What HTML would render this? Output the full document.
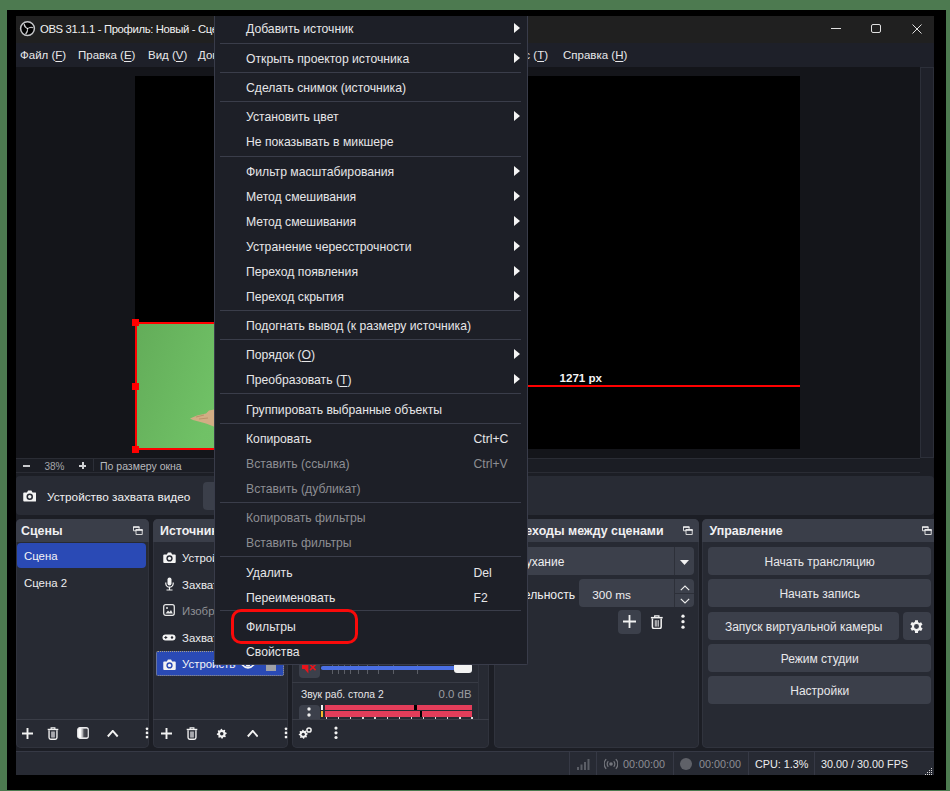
<!DOCTYPE html>
<html><head><meta charset="utf-8">
<style>
*{margin:0;padding:0;box-sizing:border-box}
html,body{width:950px;height:791px;overflow:hidden;background:#4d7a50;font-family:"Liberation Sans",sans-serif;color:#e6e6e8;font-size:12px}
.a{position:absolute}
svg{display:block}
#frame{left:7px;top:10px;width:939px;height:780px;background:#000}
#win{left:16px;top:16px;width:918px;height:759px;background:#1c1e25;overflow:hidden}
#title{left:0;top:0;width:918px;height:27px;background:#202020}
#menubar{left:0;top:27px;width:918px;height:24px;background:#1e2029}
.mb{top:0;height:24px;line-height:25px;font-size:11.5px;color:#e8e8ea;white-space:nowrap}
.u{text-decoration:underline;text-underline-offset:2px;text-decoration-thickness:1px}
#preview{left:0;top:51px;width:904px;height:391px;background:#14151a;overflow:hidden}
#canvas{left:119px;top:9px;width:665px;height:373px;background:#000}
#vscroll{left:904px;top:51px;width:14px;height:391px;background:#1f212a;border:1px solid #2c2f39}
#zoombar{left:0;top:442px;width:904px;height:15px;background:#1b1d24;border-top:1px solid #2a2c34;border-bottom:1px solid #2a2c34;font-size:10.5px;color:#a9abb0}
#toolbar{left:0;top:460px;width:918px;height:39px;background:#282b34;border-radius:4px}
.dock{top:503px;height:229px;background:#272a33;border-radius:5px;overflow:hidden;box-shadow:inset 0 0 0 1px #30333d}
.dtitle{left:0;top:0;right:0;height:23px;background:#3a3e49;font-weight:bold;font-size:12.4px;line-height:25px;padding-left:5px;white-space:nowrap;color:#f0f0f2}
.dfl{top:7px;width:10px;height:9px}
.dtb{left:0;right:0;top:200px;height:28px;border-top:1px solid #3a3d47}
#status{left:0;top:735px;width:918px;height:24px;background:#272a33;border-top:1px solid #363945;font-size:12px;color:#e6e6e8}
.btn{background:#3b3f4a;border-radius:4px;text-align:center;line-height:30px;height:28px;font-size:12px;color:#e8e8ea}
.li{height:25px;line-height:26px;font-size:11.4px;white-space:nowrap}
#menu{left:214px;top:16px;width:314px;height:649px;background:#1d1f27;border:1px solid #393c4a;border-top:0;border-radius:0 0 2px 2px}
.mi{left:31px;height:25px;line-height:26px;font-size:12.2px;color:#e6e6e8;white-space:nowrap}
.dis{color:#8d8e93}
.sep{left:5px;width:301px;height:1px;background:#3a3d4a}
.arr{left:299px;width:0;height:0;border-top:5.5px solid transparent;border-bottom:5.5px solid transparent;border-left:6.5px solid #f4f4f4}
.sc{left:258.5px;height:25px;line-height:26px;font-size:12.2px;color:#e6e6e8}
.sc.dis{color:#8d8e93}
#redbox{left:231px;top:608.5px;width:126.6px;height:35.7px;border:3.6px solid #fa0a0a;border-radius:10px}
</style></head><body>
<div id="frame" class="a"></div>
<div id="win" class="a">
  <div id="title" class="a">
    <svg class="a" style="left:3px;top:4px" width="17" height="17" viewBox="0 0 17 17">
      <circle cx="8.5" cy="8.6" r="6.9" fill="#000" stroke="#c4c5c8" stroke-width="1.5"/>
      <path d="M8.5 8.6Q5.4 8.3 4.5 4.4L5.6 3.7Q6.5 6.6 8.5 8.6z" fill="#d0d0d2"/>
      <path d="M8.5 8.6Q5.4 8.3 4.5 4.4L5.6 3.7Q6.5 6.6 8.5 8.6z" fill="#b8b9bc" transform="rotate(118 8.5 8.6)"/>
      <path d="M8.5 8.6Q5.4 8.3 4.5 4.4L5.6 3.7Q6.5 6.6 8.5 8.6z" fill="#c8c8ca" transform="rotate(236 8.5 8.6)"/>
      <circle cx="8.5" cy="8.6" r="0.9" fill="#f4f4f4"/>
    </svg>
    <div class="a" style="left:24px;top:1px;height:26px;line-height:25px;font-size:11.3px;letter-spacing:-0.35px;color:#f2f2f2;white-space:nowrap">OBS 31.1.1 - Профиль: Новый - Сцены: Без названия - Сцена</div>
    <div class="a" style="left:815px;top:12px;width:10px;height:1px;background:#e0e0e0"></div>
    <div class="a" style="left:855px;top:8px;width:10px;height:9px;border:1px solid #e0e0e0;border-radius:2px"></div>
    <svg class="a" style="left:896px;top:8px" width="10" height="10" viewBox="0 0 10 10"><path d="M0.5 0.5 L9.5 9.5 M9.5 0.5 L0.5 9.5" stroke="#e0e0e0" stroke-width="1"/></svg>
  </div>
  <div id="menubar" class="a">
    <div class="a mb" style="left:4px">Файл (<span class="u">F</span>)</div>
    <div class="a mb" style="left:62px">Правка (<span class="u">E</span>)</div>
    <div class="a mb" style="left:132px">Вид (<span class="u">V</span>)</div>
    <div class="a mb" style="left:182px">Док-панели (<span class="u">D</span>)</div>
    <div class="a mb" style="right:386px">Сервис (<span class="u">T</span>)</div>
    <div class="a mb" style="left:547px">Справка (<span class="u">H</span>)</div>
  </div>
  <div id="preview" class="a">
    <div id="canvas" class="a"></div>
    <div class="a" style="left:119px;top:256px;width:225px;height:126px;background:linear-gradient(110deg,#63ac59 0%,#70c166 40%,#78c96e 100%)"></div>
    <svg class="a" style="left:170px;top:338px" width="30" height="25" viewBox="170 338 30 25"><path d="M174 351.5L181 348.5L190 346.5L193 343.5L198 342.5L199 360L190 356.5L177 353z" fill="#d2ad84"/><path d="M180 350l8-2M183 352l9-1" stroke="#b58c63" stroke-width="0.8"/></svg>
    <div class="a" style="left:119px;top:255px;width:225px;height:2px;background:#f00"></div>
    <div class="a" style="left:119px;top:381px;width:225px;height:2px;background:#f00"></div>
    <div class="a" style="left:119px;top:255px;width:2px;height:128px;background:#f00"></div>
    <div class="a" style="left:115.8px;top:252px;width:7.3px;height:7.3px;background:#f00"></div>
    <div class="a" style="left:115.8px;top:315.5px;width:7.3px;height:7.3px;background:#f00"></div>
    <div class="a" style="left:115.8px;top:378.6px;width:7.3px;height:7.3px;background:#f00"></div>
    <div class="a" style="left:344px;top:318px;width:440px;height:2px;background:#f00"></div>
    <div class="a" style="left:543.5px;top:304px;font-weight:bold;font-size:11.6px;color:#f4f4f4;line-height:14px">1271 px</div>
  </div>
  <div id="vscroll" class="a"></div>
  <div id="zoombar" class="a">
    <div class="a" style="left:7px;top:6px;width:7px;height:1.6px;background:#c9cacd"></div>
    <div class="a" style="left:28.5px;top:1px;line-height:13px;font-size:10px;color:#a4a6ab">38%</div>
    <div class="a" style="left:63px;top:3px;width:7px;height:7px"><div class="a" style="left:0;top:3px;width:7px;height:1.6px;background:#d0d1d4"></div><div class="a" style="left:3px;top:0;width:1.6px;height:7px;background:#d0d1d4"></div></div>
    <div class="a" style="left:77px;top:0;width:1px;height:12px;background:#2c2f38"></div>
    <div class="a" style="left:84px;top:1px;line-height:13px;font-size:10.5px;color:#b8b9bd">По размеру окна</div>
  </div>
  <div id="toolbar" class="a">
    <svg class="a" style="left:6.5px;top:14.2px" width="13.5" height="11.5" viewBox="0 0 14 12"><path d="M1.2 2.6h2.9l1.2-2h3.4l1.2 2h2.9a1 1 0 0 1 1 1v7.4a1 1 0 0 1-1 1H1.2a1 1 0 0 1-1-1V3.6a1 1 0 0 1 1-1z" fill="#f4f4f4"/><circle cx="7" cy="7" r="3.4" fill="#282b34"/><circle cx="7" cy="7" r="1.8" fill="#f4f4f4"/></svg>
    <div class="a" style="left:31px;top:1.5px;height:39px;line-height:39px;font-size:11.8px;color:#f0f0f2;white-space:nowrap">Устройство захвата видео</div>
    <div class="a btn" style="left:187px;top:6px;width:120px"></div>
  </div>
  <!-- Scenes dock -->
  <div class="a dock" style="left:0;width:132.5px">
    <div class="a dtitle">Сцены</div>
    <svg class="a dfl" style="left:117px" width="11" height="10" viewBox="0 0 11 10"><path d="M0.5 1h6.2v4.3H0.5z" fill="none" stroke="#ececec" stroke-width="1"/><path d="M0 0.5h7.2v1.5H0z" fill="#f4f4f4"/><path d="M3.3 4.1h6.9v5.4H3.3z" fill="#3a3e49" stroke="#ececec" stroke-width="1"/><path d="M2.8 3.6h7.9v1.6H2.8z" fill="#f4f4f4"/></svg>
    <div class="a li" style="left:0.5px;top:24px;width:129px;background:#2a4ab5;border-radius:4px;padding-left:7.5px;color:#f4f4f6">Сцена</div>
    <div class="a li" style="left:0.5px;top:51px;width:129px;padding-left:7.5px;color:#eeeef0">Сцена 2</div>
    <div class="a dtb"></div>
  </div>
  <!-- Sources dock -->
  <div class="a dock" style="left:136.5px;width:135.5px">
    <div class="a dtitle" style="padding-left:7.5px">Источники</div>
    <svg class="a" style="left:10.5px;top:32.5px" width="13" height="11" viewBox="0 0 14 12"><path d="M1.2 2.6h2.9l1.2-2h3.4l1.2 2h2.9a1 1 0 0 1 1 1v7.4a1 1 0 0 1-1 1H1.2a1 1 0 0 1-1-1V3.6a1 1 0 0 1 1-1z" fill="#f4f4f4"/><circle cx="7" cy="7" r="3.4" fill="#272a33"/><circle cx="7" cy="7" r="1.8" fill="#f4f4f4"/></svg>
    <div class="a li" style="left:29.5px;top:26px;color:#eeeef0">Устройство захвата видео</div>
    <svg class="a" style="left:12px;top:58px" width="9" height="14" viewBox="0 0 9 14"><rect x="2.5" y="0.5" width="4" height="8" rx="2" fill="#f4f4f4"/><path d="M0.8 5.5v1a3.7 3.7 0 0 0 7.4 0v-1M4.5 10.5v2M1.5 13h6" stroke="#f4f4f4" stroke-width="1.2" fill="none"/></svg>
    <div class="a li" style="left:29.5px;top:52.5px;color:#eeeef0">Захват входного аудио</div>
    <svg class="a" style="left:10.5px;top:85px" width="12" height="12" viewBox="0 0 12 12"><rect x="0.7" y="0.7" width="10.6" height="10.6" rx="2" fill="none" stroke="#e6e6e6" stroke-width="1.3"/><path d="M2.5 9.5l2.5-3 1.5 1.5 1.5-2 1.8 3.5z" fill="#e6e6e6"/><circle cx="4" cy="4" r="1" fill="#e6e6e6"/></svg>
    <div class="a li" style="left:29.5px;top:79px;color:#8f9095">Изображение</div>
    <svg class="a" style="left:9.5px;top:114.5px" width="14" height="7" viewBox="0 0 14 7"><rect x="0.5" y="0.5" width="13" height="6" rx="3" fill="#f4f4f4"/><path d="M2.3 3.5h3M3.8 2v3" stroke="#272a33" stroke-width="1"/><circle cx="10" cy="3.5" r="1.2" fill="#272a33"/></svg>
    <div class="a li" style="left:29.5px;top:105.5px;color:#eeeef0">Захват игры</div>
    <div class="a" style="left:3.4px;top:132px;width:128.5px;height:25px;background:#2a4ab5;border:1px dotted #a89f85;border-radius:2px"></div>
    <svg class="a" style="left:10.5px;top:139.5px" width="13" height="11" viewBox="0 0 14 12"><path d="M1.2 2.6h2.9l1.2-2h3.4l1.2 2h2.9a1 1 0 0 1 1 1v7.4a1 1 0 0 1-1 1H1.2a1 1 0 0 1-1-1V3.6a1 1 0 0 1 1-1z" fill="#f4f4f4"/><circle cx="7" cy="7" r="3.4" fill="#2a4ab5"/><circle cx="7" cy="7" r="1.8" fill="#f4f4f4"/></svg>
    <div class="a li" style="left:29.5px;top:132px;width:54px;overflow:hidden;color:#f4f4f6">Устройство</div>
    <svg class="a" style="left:88px;top:139.5px" width="14" height="11" viewBox="0 0 14 11"><path d="M0.9 5.5Q7 -1.2 13.1 5.5Q7 12.2 0.9 5.5z" stroke="#f4f4f4" stroke-width="1.7" fill="none"/><circle cx="7" cy="5.5" r="2.3" fill="#f4f4f4"/></svg>
    <div class="a" style="left:113px;top:145px;width:10.5px;height:7px;background:#9fa0a6"></div>
    <div class="a dtb"></div>
  </div>
  <!-- Mixer dock -->
  <div class="a dock" style="left:276px;width:197px">
    <div class="a dtitle">Микшер аудио</div>
    <div class="a" style="left:0;top:23px;width:197px;height:177px;overflow:hidden"><div class="a" style="left:0;top:-23px;width:197px;height:200px">
    <div class="a" style="left:186px;top:23px;width:11px;height:177px;border-left:1px solid #31343e"></div>
    <div class="a" style="left:6.5px;top:136px;width:21.5px;height:22.5px;background:#3c404b;border-radius:4px"></div>
    <svg class="a" style="left:9px;top:138px" width="16" height="18" viewBox="0 0 16 18"><path d="M1 6h2.5L7.4 2v14.5L3.5 12H1z" fill="#e8141b"/><path d="M9 7.5l5.6 5.6M14.6 7.5l-5.6 5.6" stroke="#e8141b" stroke-width="1.7"/></svg>
    <div class="a" style="left:40.3px;top:146.4px;width:1px;height:8.4px;background:#5b5e67"></div><div class="a" style="left:45.9px;top:146.4px;width:1px;height:8.4px;background:#5b5e67"></div><div class="a" style="left:51.6px;top:146.4px;width:1px;height:8.4px;background:#5b5e67"></div><div class="a" style="left:57.5px;top:146.4px;width:1px;height:8.4px;background:#5b5e67"></div><div class="a" style="left:65.9px;top:146.4px;width:1px;height:8.4px;background:#5b5e67"></div><div class="a" style="left:74.8px;top:146.4px;width:1px;height:8.4px;background:#5b5e67"></div><div class="a" style="left:86.3px;top:146.4px;width:1px;height:8.4px;background:#5b5e67"></div><div class="a" style="left:101.4px;top:146.4px;width:1px;height:8.4px;background:#5b5e67"></div><div class="a" style="left:124.5px;top:146.4px;width:1px;height:8.4px;background:#5b5e67"></div>
    <div class="a" style="left:28.8px;top:147.4px;width:146px;height:3.6px;background:#4a6fe3;border-radius:1.8px"></div>
    <div class="a" style="left:162px;top:144px;width:17.5px;height:9.5px;background:#f2f2f2;border-radius:3px"></div>
    
    <div class="a" style="left:0;top:163px;width:186px;height:1px;background:#383b45"></div>
    <div class="a" style="left:9px;top:169px;font-size:10.3px;line-height:14px;color:#e6e6e8;white-space:nowrap">Звук раб. стола 2</div>
    <div class="a" style="left:110px;top:167.5px;width:69.5px;text-align:right;font-size:11.4px;line-height:14px;color:#9c9da2;white-space:nowrap">0.0 dB</div>
    <div class="a" style="left:6.5px;top:185.5px;width:21.5px;height:22px;background:#3c404b;border-radius:4px"></div>
    <svg class="a" style="left:15px;top:187.5px" width="4" height="13" viewBox="0 0 4 13"><circle cx="2" cy="2" r="1.7" fill="#eee"/><circle cx="2" cy="8" r="1.7" fill="#eee"/></svg>
    <div class="a" style="left:29.2px;top:185.5px;width:2px;height:5px;background:#f4f4f4"></div>
    <div class="a" style="left:29.2px;top:192.4px;width:2px;height:5.3px;background:#f3b62c"></div>
    <div class="a" style="left:33.4px;top:185.5px;width:147px;height:5.3px;background:#e33d5a"></div>
    <div class="a" style="left:33.4px;top:192.4px;width:147px;height:5.6px;background:#e33d5a"></div>
    <div class="a" style="left:122.2px;top:185.5px;width:2.8px;height:5.3px;background:#000"></div>
    <div class="a" style="left:127.5px;top:192.4px;width:2.7px;height:5.6px;background:#000"></div>
    <div class="a" style="left:33.6px;top:198px;width:147px;height:2px;background:repeating-linear-gradient(90deg,#dcdcdc 0 1.2px,transparent 1.2px 12.12px)"></div>
    </div></div>
    <div class="a dtb"></div>
  </div>
  <!-- Transitions dock -->
  <div class="a dock" style="left:477.5px;width:205px">
    <div class="a dtitle" style="padding-left:8.5px">Переходы между сценами</div>
    <svg class="a dfl" style="left:189.5px" width="11" height="10" viewBox="0 0 11 10"><path d="M0.5 1h6.2v4.3H0.5z" fill="none" stroke="#ececec" stroke-width="1"/><path d="M0 0.5h7.2v1.5H0z" fill="#f4f4f4"/><path d="M3.3 4.1h6.9v5.4H3.3z" fill="#3a3e49" stroke="#ececec" stroke-width="1"/><path d="M2.8 3.6h7.9v1.6H2.8z" fill="#f4f4f4"/></svg>
    <div class="a" style="left:6.5px;top:28.2px;width:193.6px;height:28px;background:#3c404b;border-radius:4px"></div>
    <div class="a" style="left:180px;top:28.2px;width:1px;height:28px;background:#2d3039"></div>
    <svg class="a" style="left:186.5px;top:40.5px" width="9" height="5" viewBox="0 0 9 5"><path d="M0 0h9L4.5 5z" fill="#f2f2f2"/></svg>
    <div class="a" style="left:13px;top:29px;line-height:28px;font-size:12px;color:#eeeef0">Затухание</div>
    <div class="a" style="left:0px;top:62px;line-height:28px;font-size:12.2px;color:#eeeef0;width:81.7px;text-align:right">Длительность</div>
    <div class="a" style="left:85.9px;top:60.4px;width:114.2px;height:28px;background:#3c404b;border-radius:4px"></div>
    <div class="a" style="left:180px;top:60.4px;width:1px;height:28px;background:#2d3039"></div>
    <div class="a" style="left:181px;top:74.3px;width:19px;height:1px;background:#2d3039"></div>
    <svg class="a" style="left:186px;top:66px" width="10" height="6" viewBox="0 0 10 6"><path d="M0.8 5.2L5 1L9.2 5.2" stroke="#e8e8e8" stroke-width="1.2" fill="none"/></svg>
    <svg class="a" style="left:186px;top:78.5px" width="10" height="6" viewBox="0 0 10 6"><path d="M0.8 0.8L5 5L9.2 0.8" stroke="#e8e8e8" stroke-width="1.2" fill="none"/></svg>
    <div class="a" style="left:98.8px;top:62px;line-height:28px;font-size:11.8px;color:#eeeef0">300 ms</div>
    <div class="a" style="left:124.3px;top:90.7px;width:22.8px;height:24.7px;background:#3c404b;border-radius:4px"></div>
    
    
    
  </div>
  <!-- Controls dock -->
  <div class="a dock" style="left:686px;width:240px">
    <div class="a dtitle" style="padding-left:7.5px">Управление</div>
    <svg class="a dfl" style="left:219.8px" width="11" height="10" viewBox="0 0 11 10"><path d="M0.5 1h6.2v4.3H0.5z" fill="none" stroke="#ececec" stroke-width="1"/><path d="M0 0.5h7.2v1.5H0z" fill="#f4f4f4"/><path d="M3.3 4.1h6.9v5.4H3.3z" fill="#3a3e49" stroke="#ececec" stroke-width="1"/><path d="M2.8 3.6h7.9v1.6H2.8z" fill="#f4f4f4"/></svg>
    <div class="a btn" style="left:6.4px;top:28.2px;width:222.6px">Начать трансляцию</div>
    <div class="a btn" style="left:6.4px;top:60.4px;width:222.6px">Начать запись</div>
    <div class="a btn" style="left:6.4px;top:92.7px;width:190.6px">Запуск виртуальной камеры</div>
    <div class="a btn" style="left:200.9px;top:92.7px;width:28.1px"></div>
    <svg class="a" style="left:206px;top:98.5px" width="17" height="17" viewBox="0 0 24 24"><path fill="#f2f2f2" d="M19.4 13a7.5 7.5 0 0 0 0-2l2.1-1.6-2-3.5-2.5 1a7.7 7.7 0 0 0-1.7-1L15 3h-4l-.4 2.7a7.7 7.7 0 0 0-1.7 1l-2.5-1-2 3.5L6.6 11a7.5 7.5 0 0 0 0 2l-2.1 1.6 2 3.5 2.5-1a7.7 7.7 0 0 0 1.7 1L11 21h4l.4-2.7a7.7 7.7 0 0 0 1.7-1l2.5 1 2-3.5zM13 15.5a3.5 3.5 0 1 1 0-7 3.5 3.5 0 0 1 0 7z" transform="translate(-1 0)"/></svg>
    <div class="a btn" style="left:6.4px;top:124.5px;width:222.6px">Режим студии</div>
    <div class="a btn" style="left:6.4px;top:156.8px;width:222.6px">Настройки</div>
  </div>
  <!-- Status bar -->
  <div id="status" class="a">
    <div class="a" style="left:553px;top:0;width:1px;height:24px;background:#363945"></div>
    <div class="a" style="left:580px;top:0;width:1px;height:24px;background:#363945"></div>
    <div class="a" style="left:656.5px;top:0;width:1px;height:24px;background:#363945"></div>
    <div class="a" style="left:732px;top:0;width:1px;height:24px;background:#363945"></div>
    <div class="a" style="left:798px;top:0;width:1px;height:24px;background:#363945"></div>
    <svg class="a" style="left:560px;top:5px" width="14" height="13" viewBox="0 0 14 13"><path d="M1 10h2v3H1zM4.5 7.5h2V13h-2zM8 5h2v8H8zM11.5 2h2v11h-2z" fill="#5b5e66"/></svg>
    <svg class="a" style="left:588px;top:6px" width="14" height="12" viewBox="0 0 14 12"><circle cx="7" cy="6" r="1.8" fill="#74767d"/><path d="M4.3 3.3a3.8 3.8 0 0 0 0 5.4M9.7 3.3a3.8 3.8 0 0 1 0 5.4M2.2 1.2a6.8 6.8 0 0 0 0 9.6M11.8 1.2a6.8 6.8 0 0 1 0 9.6" stroke="#74767d" stroke-width="1.2" fill="none"/></svg>
    <div class="a" style="left:607px;top:0;line-height:24px;font-size:10.8px;color:#8d8e94">00:00:00</div>
    <div class="a" style="left:664px;top:6px;width:12px;height:12px;border-radius:50%;background:#5f6168"></div>
    <div class="a" style="left:683px;top:0;line-height:24px;font-size:10.8px;color:#8d8e94">00:00:00</div>
    <div class="a" style="left:739px;top:0;line-height:24px;font-size:10.8px;color:#eeeef0">CPU: 1.3%</div>
    <div class="a" style="left:805px;top:0;line-height:24px;font-size:10.8px;color:#eeeef0">30.00 / 30.00 FPS</div>
    <svg class="a" style="left:908px;top:15px" width="9" height="9" viewBox="0 0 9 9"><path d="M7 1h1v1H7zM5 3h1v1H5zM7 3h1v1H7zM3 5h1v1H3zM5 5h1v1H5zM7 5h1v1H7zM1 7h1v1H1zM3 7h1v1H3zM5 7h1v1H5zM7 7h1v1H7z" fill="#d8d8d8"/></svg>
  </div>
</div>
<div class="a" style="left:0;top:0;width:950px;height:791px">
<svg class="a" style="left:21.80px;top:727.70px" width="11" height="11" viewBox="0 0 11 11"><path d="M5.5 0V11M0 5.5H11" stroke="#f2f2f2" stroke-width="1.9"/></svg>
<svg class="a" style="left:47.00px;top:726.90px" width="12" height="13" viewBox="0 0 14 15"><path d="M0.8 2.8H13.2" stroke="#f2f2f2" stroke-width="1.6"/><path d="M4.8 2.8V1H9.2V2.8" stroke="#f2f2f2" stroke-width="1.3" fill="none"/><path d="M2.4 3.6V12.3Q2.4 14.2 4.3 14.2H9.7Q11.6 14.2 11.6 12.3V3.6" stroke="#f2f2f2" stroke-width="1.6" fill="none"/><rect x="4.6" y="5.2" width="4.8" height="7" fill="#9a9ba1"/><path d="M6.2 5.2V12.2M7.8 5.2V12.2" stroke="#c4c5c9" stroke-width="0.5"/></svg>
<svg class="a" style="left:76.65px;top:727.35px" width="12" height="12" viewBox="0 0 12 12"><defs><linearGradient id="fg" x1="0" x2="1"><stop offset="0" stop-color="#ffffff"/><stop offset="0.25" stop-color="#ffffff"/><stop offset="0.55" stop-color="#8a8b90"/><stop offset="1" stop-color="#3a3c44"/></linearGradient></defs><rect x="0.8" y="0.8" width="10.4" height="10.4" rx="2" fill="url(#fg)" stroke="#e8e8ea" stroke-width="1.4"/><rect x="6.5" y="2" width="4" height="8" fill="#2a2c33" opacity="0.6"/></svg>
<svg class="a" style="left:107.25px;top:730.45px" width="11.5" height="7.5" viewBox="0 0 11.5 7.5"><path d="M0.8 6.5L5.75 0.9L10.7 6.5" stroke="#f2f2f2" stroke-width="1.9" fill="none"/></svg>
<svg class="a" style="left:144.70px;top:726.75px" width="4" height="12" viewBox="0 0 4 12"><circle cx="2" cy="1.85" r="1.35" fill="#f2f2f2"/><circle cx="2" cy="5.95" r="1.35" fill="#f2f2f2"/><circle cx="2" cy="10.05" r="1.35" fill="#f2f2f2"/></svg>
<svg class="a" style="left:161.00px;top:727.80px" width="11" height="11" viewBox="0 0 11 11"><path d="M5.5 0V11M0 5.5H11" stroke="#f2f2f2" stroke-width="1.9"/></svg>
<svg class="a" style="left:186.10px;top:726.90px" width="12" height="13" viewBox="0 0 14 15"><path d="M0.8 2.8H13.2" stroke="#f2f2f2" stroke-width="1.6"/><path d="M4.8 2.8V1H9.2V2.8" stroke="#f2f2f2" stroke-width="1.3" fill="none"/><path d="M2.4 3.6V12.3Q2.4 14.2 4.3 14.2H9.7Q11.6 14.2 11.6 12.3V3.6" stroke="#f2f2f2" stroke-width="1.6" fill="none"/><rect x="4.6" y="5.2" width="4.8" height="7" fill="#9a9ba1"/><path d="M6.2 5.2V12.2M7.8 5.2V12.2" stroke="#c4c5c9" stroke-width="0.5"/></svg>
<svg class="a" style="left:215.95px;top:727.75px" width="11.5" height="11.5" viewBox="0 0 14 14"><path d="M13.00 7.00L12.88 8.17L11.25 8.76L10.82 9.56L11.24 11.24L10.33 11.99L8.76 11.25L7.90 11.51L7.00 13.00L5.83 12.88L5.24 11.25L4.44 10.82L2.76 11.24L2.01 10.33L2.75 8.76L2.49 7.90L1.00 7.00L1.12 5.83L2.75 5.24L3.18 4.44L2.76 2.76L3.67 2.01L5.24 2.75L6.10 2.49L7.00 1.00L8.17 1.12L8.76 2.75L9.56 3.18L11.24 2.76L11.99 3.67L11.25 5.24L11.51 6.10z" fill="#f2f2f2" transform="rotate(-11 7 7)"/><circle cx="7" cy="7" r="2.1" fill="#272a33"/></svg>
<svg class="a" style="left:246.55px;top:730.45px" width="11.5" height="7.5" viewBox="0 0 11.5 7.5"><path d="M0.8 6.5L5.75 0.9L10.7 6.5" stroke="#f2f2f2" stroke-width="1.9" fill="none"/></svg>
<svg class="a" style="left:283.80px;top:726.75px" width="4" height="12" viewBox="0 0 4 12"><circle cx="2" cy="1.85" r="1.35" fill="#f2f2f2"/><circle cx="2" cy="5.95" r="1.35" fill="#f2f2f2"/><circle cx="2" cy="10.05" r="1.35" fill="#f2f2f2"/></svg>
<svg class="a" style="left:298.15px;top:728.85px" width="10.5" height="10.5" viewBox="0 0 14 14"><path d="M13.00 7.00L12.88 8.17L11.25 8.76L10.82 9.56L11.24 11.24L10.33 11.99L8.76 11.25L7.90 11.51L7.00 13.00L5.83 12.88L5.24 11.25L4.44 10.82L2.76 11.24L2.01 10.33L2.75 8.76L2.49 7.90L1.00 7.00L1.12 5.83L2.75 5.24L3.18 4.44L2.76 2.76L3.67 2.01L5.24 2.75L6.10 2.49L7.00 1.00L8.17 1.12L8.76 2.75L9.56 3.18L11.24 2.76L11.99 3.67L11.25 5.24L11.51 6.10z" fill="#f2f2f2" transform="rotate(-11 7 7)"/><circle cx="7" cy="7" r="2.1" fill="#272a33"/></svg><svg class="a" style="left:306.40px;top:727.40px" width="6" height="6" viewBox="0 0 6 6"><circle cx="3" cy="3" r="2.1" fill="none" stroke="#f2f2f2" stroke-width="1.5"/></svg>
<svg class="a" style="left:334.00px;top:726.30px" width="4" height="14" viewBox="0 0 4 14"><circle cx="2" cy="2.10" r="1.60" fill="#f2f2f2"/><circle cx="2" cy="6.80" r="1.60" fill="#f2f2f2"/><circle cx="2" cy="11.50" r="1.60" fill="#f2f2f2"/></svg>
<svg class="a" style="left:622.70px;top:615.30px" width="13" height="13" viewBox="0 0 13 13"><path d="M6.5 0V13M0 6.5H13" stroke="#f2f2f2" stroke-width="1.8"/></svg>
<svg class="a" style="left:649.60px;top:614.85px" width="13.6" height="14.3" viewBox="0 0 14 15"><path d="M0.8 2.8H13.2" stroke="#f2f2f2" stroke-width="1.6"/><path d="M4.8 2.8V1H9.2V2.8" stroke="#f2f2f2" stroke-width="1.3" fill="none"/><path d="M2.4 3.6V12.3Q2.4 14.2 4.3 14.2H9.7Q11.6 14.2 11.6 12.3V3.6" stroke="#f2f2f2" stroke-width="1.6" fill="none"/><path d="M5.4 5.4V12.2M7 5.4V12.2M8.6 5.4V12.2" stroke="#f2f2f2" stroke-width="0.9"/></svg>
<svg class="a" style="left:680.70px;top:614.35px" width="4" height="16" viewBox="0 0 4 16"><circle cx="2" cy="2.15" r="1.65" fill="#f2f2f2"/><circle cx="2" cy="7.65" r="1.65" fill="#f2f2f2"/><circle cx="2" cy="13.15" r="1.65" fill="#f2f2f2"/></svg>
</div>
<div id="menu" class="a">
<div class="a mi" style="top:0px">Добавить источник</div>
<div class="a arr" style="top:7px"></div>
<div class="a sep" style="top:27px"></div>
<div class="a mi" style="top:30px">Открыть проектор источника</div>
<div class="a arr" style="top:37px"></div>
<div class="a sep" style="top:56px"></div>
<div class="a mi" style="top:59px">Сделать снимок (источника)</div>
<div class="a sep" style="top:85px"></div>
<div class="a mi" style="top:88px">Установить цвет</div>
<div class="a arr" style="top:95px"></div>
<div class="a mi" style="top:113px">Не показывать в микшере</div>
<div class="a sep" style="top:140px"></div>
<div class="a mi" style="top:143px">Фильтр масштабирования</div>
<div class="a arr" style="top:150px"></div>
<div class="a mi" style="top:168px">Метод смешивания</div>
<div class="a arr" style="top:175px"></div>
<div class="a mi" style="top:193px">Метод смешивания</div>
<div class="a arr" style="top:200px"></div>
<div class="a mi" style="top:218px">Устранение чересстрочности</div>
<div class="a arr" style="top:225px"></div>
<div class="a mi" style="top:243px">Переход появления</div>
<div class="a arr" style="top:250px"></div>
<div class="a mi" style="top:268px">Переход скрытия</div>
<div class="a arr" style="top:275px"></div>
<div class="a sep" style="top:294px"></div>
<div class="a mi" style="top:297px">Подогнать вывод (к размеру источника)</div>
<div class="a sep" style="top:323px"></div>
<div class="a mi" style="top:326px">Порядок (<span class=u>O</span>)</div>
<div class="a arr" style="top:333px"></div>
<div class="a mi" style="top:351px">Преобразовать (<span class=u>T</span>)</div>
<div class="a arr" style="top:358px"></div>
<div class="a sep" style="top:377px"></div>
<div class="a mi" style="top:381px">Группировать выбранные объекты</div>
<div class="a sep" style="top:407px"></div>
<div class="a mi" style="top:410px">Копировать</div>
<div class="a sc" style="top:410px">Ctrl+C</div>
<div class="a mi dis" style="top:435px">Вставить (ссылка)</div>
<div class="a sc dis" style="top:435px">Ctrl+V</div>
<div class="a mi dis" style="top:460px">Вставить (дубликат)</div>
<div class="a sep" style="top:486px"></div>
<div class="a mi dis" style="top:489px">Копировать фильтры</div>
<div class="a mi dis" style="top:514px">Вставить фильтры</div>
<div class="a sep" style="top:540px"></div>
<div class="a mi" style="top:544px">Удалить</div>
<div class="a sc" style="top:544px">Del</div>
<div class="a mi" style="top:569px">Переименовать</div>
<div class="a sc" style="top:569px">F2</div>
<div class="a sep" style="top:594px"></div>
<div class="a mi" style="top:598px">Фильтры</div>
<div class="a mi" style="top:623px">Свойства</div>
<!-- end y 663.8666666666666 -->
</div>
<div class="a" id="redbox"></div>
</body></html>
